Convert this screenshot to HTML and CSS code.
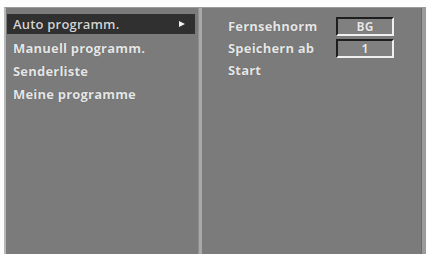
FILE: index.html
```html
<!DOCTYPE html>
<html lang="de">
<head>
<meta charset="utf-8">
<title>Auto programm.</title>
<link rel="stylesheet" href="styles.css">
</head>
<body>
<div class="screen">
  <div class="menu">
    <div class="item active"><span>Auto programm.</span><span class="arrow"></span></div>
    <div class="item">Manuell programm.</div>
    <div class="item">Senderliste</div>
    <div class="item">Meine programme</div>
  </div>
  <div class="divider"></div>
  <div class="sub">
    <div class="row"><span class="label">Fernsehnorm</span><span class="box">BG</span></div>
    <div class="row"><span class="label">Speichern ab</span><span class="box">1</span></div>
    <div class="row"><span class="label">Start</span></div>
  </div>
  <div class="edge"></div>
</div>
</body>
</html>
```
FILE: styles.css
```css
html, body {
  margin: 0;
  padding: 0;
  background: #fdfdfd;
}
body {
  font-family: "Open Sans", "Noto Sans", "DejaVu Sans", sans-serif;
  width: 428px;
  height: 254px;
  overflow: hidden;
}
.screen {
  margin: 7px 0 0 4px;
  width: 422px;
  height: 247px;
  background: #7b7b7b;
  display: flex;
  border-left: 2px solid #b8b8b8;
  border-top: 1px solid #9a9a9a;
  box-sizing: border-box;
}
.menu {
  width: 192px;
  padding-top: 6px;
  display: flex;
  flex-direction: column;
}
.item {
  height: 23px;
  line-height: 23px;
  padding-left: 7px;
  font-size: 13px;
  font-weight: 700;
  color: #e6e6e6;
  letter-spacing: 0.2px;
  text-shadow: 0 0 1px rgba(0,0,0,0.35);
}
.item.active {
  height: 20px;
  line-height: 20px;
  margin-left: 1px;
  margin-right: 3px;
  padding-left: 6px;
  margin-bottom: 3px;
  background: #303030;
  display: flex;
  justify-content: space-between;
  align-items: center;
  font-weight: 600;
  color: #d4d4d4;
}
.arrow {
  width: 0;
  height: 0;
  border-left: 6px solid #f2f2f2;
  border-top: 3.5px solid transparent;
  border-bottom: 3.5px solid transparent;
  margin-right: 10px;
}
.divider {
  width: 3px;
  background: #a8a8a8;
  border-left: 1px solid #8e8e8e;
}
.sub {
  flex: 1;
  padding: 7px 0 0 26px;
  display: flex;
  flex-direction: column;
}
.row {
  height: 22px;
  display: flex;
  align-items: center;
  font-size: 13px;
  font-weight: 700;
  letter-spacing: 0.2px;
  color: #e6e6e6;
  text-shadow: 0 0 1px rgba(0,0,0,0.35);
}
.label {
  width: 108px;
}
.box {
  width: 58px;
  height: 19px;
  box-sizing: border-box;
  border-top: 2px solid #1e1e1e;
  border-left: 2px solid #1e1e1e;
  border-bottom: 2px solid #f0f0f0;
  border-right: 2px solid #f0f0f0;
  background: #808080;
  text-align: center;
  line-height: 15px;
  font-size: 12px;
}
.edge {
  width: 4px;
  background: #9a9a9a;
  border-left: 1px solid #6a6a6a;
}
```
